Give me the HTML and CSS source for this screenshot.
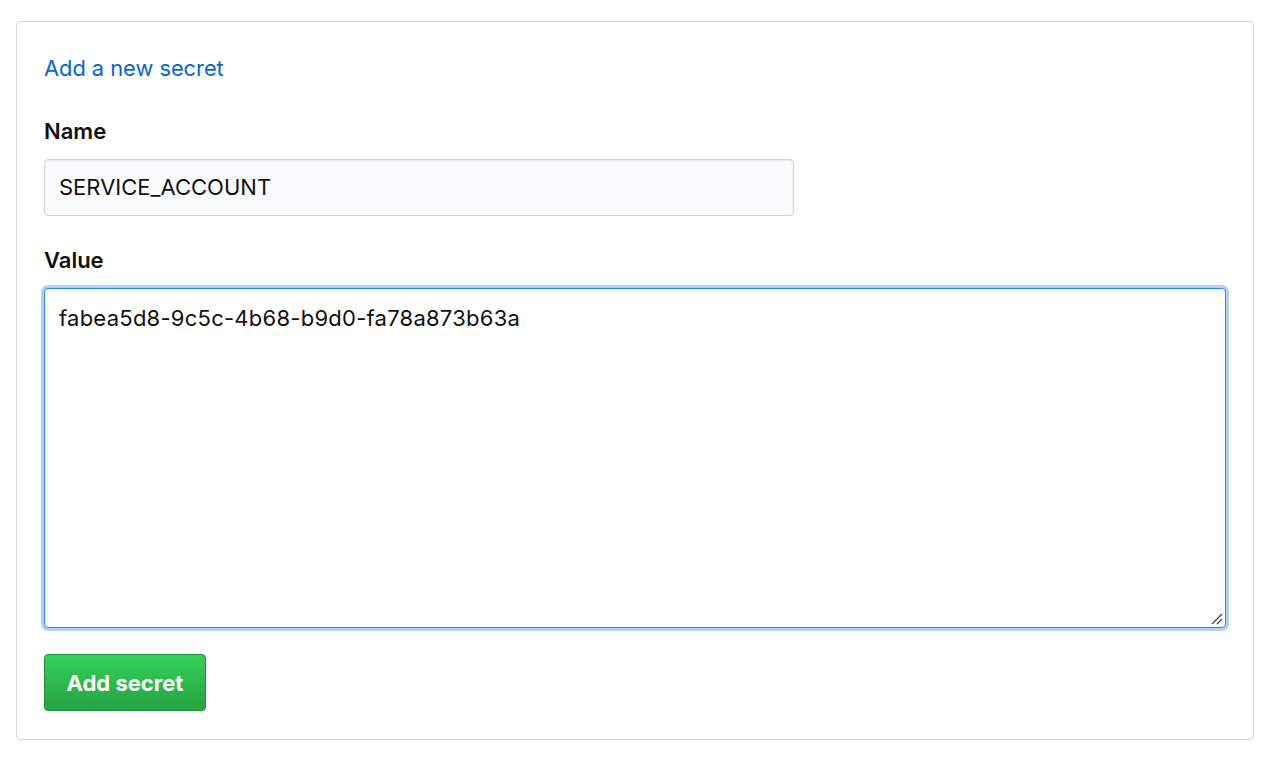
FILE: index.html
```html
<!DOCTYPE html>
<html>
<head>
<meta charset="utf-8">
<link rel="stylesheet" href="styles.css">
</head>
<body>
<div class="box">
  <a class="title" href="#">Add a new secret</a>
  <div class="field">
    <label class="label">Name</label>
    <div class="input">SERVICE_ACCOUNT</div>
  </div>
  <div class="field">
    <label class="label">Value</label>
    <div class="textarea">fabea5d8-9c5c-4b68-b9d0-fa78a873b63a
      <svg class="grip" width="14" height="14" viewBox="0 0 14 14"><path d="M13 3 L3 13 M13 8 L8 13" stroke="#444" stroke-width="1.3" fill="none"/></svg>
    </div>
  </div>
  <button class="btn">Add secret</button>
</div>
</body>
</html>
```
FILE: styles.css
```css
html, body { margin: 0; padding: 0; background: #fff; }
body {
  font-family: Inter, "Liberation Sans", Arial, sans-serif;
  color: #24292e;
  padding: 21px 26px 0 16px;
}
.box {
  box-sizing: border-box;
  width: 1238px;
  height: 719px;
  border: 1.5px solid #d5d8db;
  border-radius: 4px;
  padding: 32px 28px 0 27px;
  display: flex;
  flex-direction: column;
  align-items: flex-start;
}
.title {
  color: #0366d6;
  text-decoration: none;
  font-size: 21.8px;
  line-height: 28px;
}
.field {
  display: flex;
  flex-direction: column;
  align-items: flex-start;
}
.field:first-of-type { margin-top: 35px; }
.label {
  font-weight: 600;
  font-size: 22px;
  line-height: 28px;
  color: #111;
  margin-bottom: 14px;
}
.input {
  box-sizing: border-box;
  width: 750px;
  height: 57px;
  border: 1.5px solid #cfd3d7;
  border-radius: 4px;
  background: #fafbfc;
  box-shadow: inset 0 1px 2px rgba(27,31,35,0.08);
  font-size: 22px;
  line-height: 54px;
  padding-left: 14px;
  color: #111;
  margin-bottom: 30px;
}
.textarea {
  position: relative;
  box-sizing: border-box;
  width: 1182px;
  height: 340px;
  border: 1.5px solid #2188ff;
  border-radius: 4px;
  background: #fff;
  box-shadow: 0 0 0 3px rgba(3,102,214,0.3);
  font-size: 22px;
  letter-spacing: 0.25px;
  line-height: 28px;
  padding: 15px 14px;
  color: #111;
  white-space: pre-line;
}
.grip { position: absolute; right: 2px; bottom: 2px; }
.btn {
  margin-top: 26px;
  box-sizing: border-box;
  width: 162px;
  height: 57px;
  border: 1.5px solid #1e8e3a;
  border-radius: 4px;
  background: linear-gradient(#34d058, #28a745 90%);
  color: #fff;
  font-family: Inter, "Liberation Sans", Arial, sans-serif;
  font-weight: 700;
  font-size: 22px;
  padding: 0;
}
```
